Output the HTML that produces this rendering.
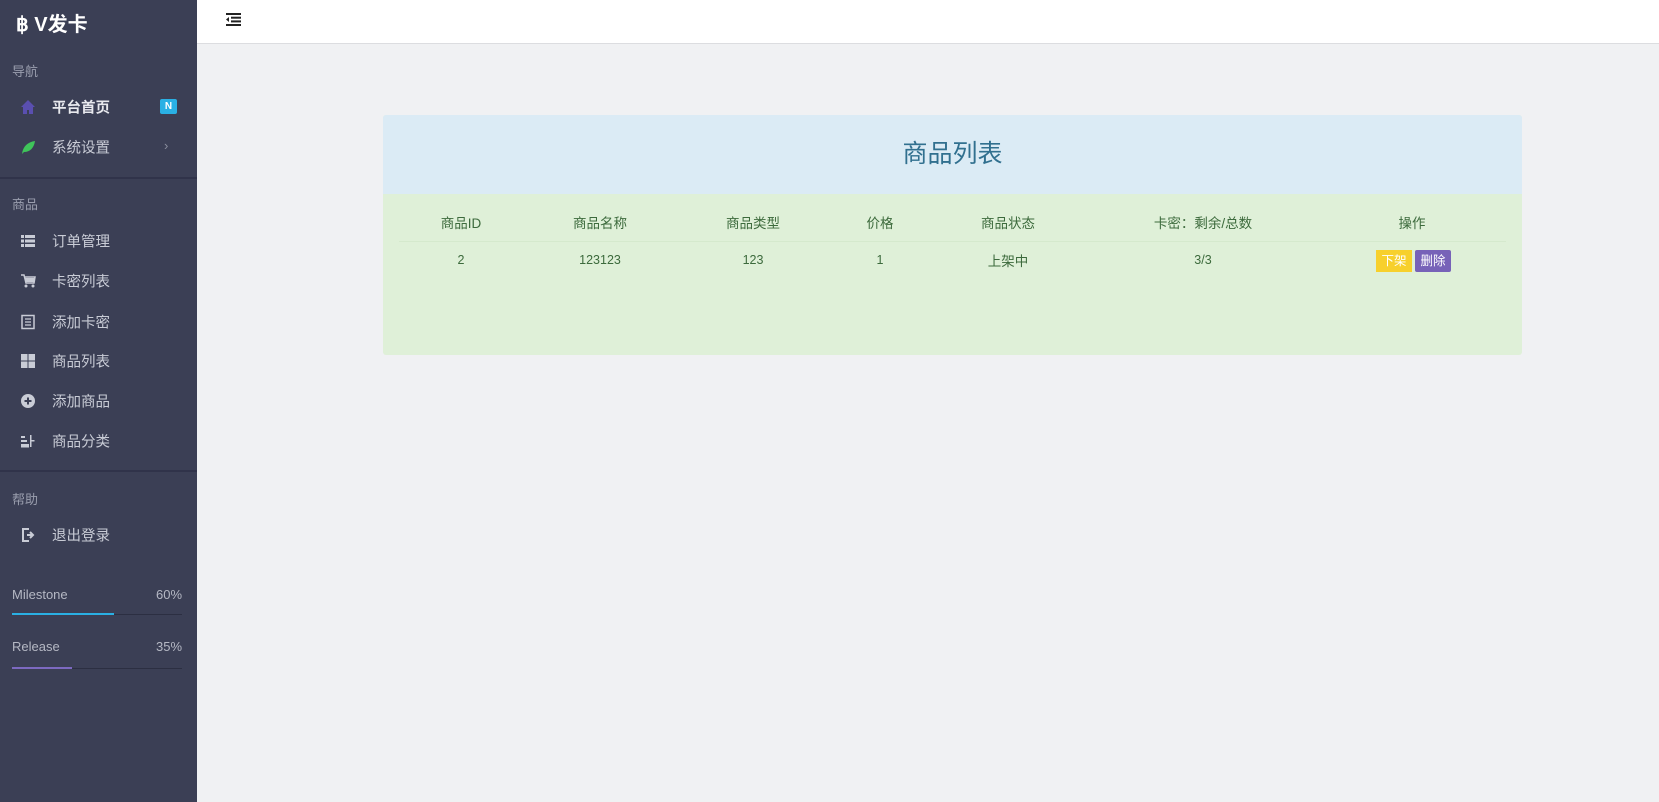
<!DOCTYPE html>
<html><head><meta charset="utf-8"><style>
*{margin:0;padding:0;box-sizing:border-box}
body{width:1659px;height:802px;overflow:hidden;background:#f0f1f3;font-family:"Liberation Sans","Noto Sans CJK SC",sans-serif;position:relative}
.sb{position:absolute;left:0;top:0;width:197px;height:802px;background:#3b3f55;color:#c3c6d1}
.abs{position:absolute}
.lbl{position:absolute;left:12px;font-size:13px;color:#9a9eae}
.it{position:absolute;left:52px;font-size:14.5px;color:#c9ccd6;transform:translateY(-50%)}
.ic{position:absolute;left:20px;width:16px;height:16px;transform:translateY(-50%)}
.hd{position:absolute;left:197px;top:0;right:0;height:44px;background:#fff;border-bottom:1px solid #dcdde0}
.th,.td{position:absolute;transform:translate(-50%,-50%);font-size:13.5px;color:#3c6a3c;white-space:nowrap}
</style></head><body>
<div class="sb">
 <div class="abs" style="left:16px;top:8px;font-size:20px;font-weight:bold;color:#fff">฿ V发卡</div>
 <div class="lbl" style="top:61px">导航</div>
 <svg class="ic" style="top:107px" viewBox="0 0 16 16"><path d="M8 1L1 8h2v7h4v-4h2v4h4V8h2z" fill="#5a4fb0"/></svg>
 <div class="it" style="top:107px;color:#e8e9ee;font-weight:bold">平台首页</div>
 <div class="abs" style="left:160px;top:99px;width:17px;height:15px;background:#2ab0e4;border-radius:2px;color:#fff;font-size:10px;font-weight:bold;text-align:center;line-height:15px">N</div>
 <svg class="ic" style="top:147px" viewBox="0 0 16 16"><path d="M2 15C3 7 8 3 15 2c-1 7-5 11-11 11z" fill="#3fc45a"/></svg>
 <div class="it" style="top:147px">系统设置</div>
 <div class="abs" style="left:164px;top:138px;font-size:13px;color:#8a8e9e">›</div>
 <div class="abs" style="left:0;top:177px;width:197px;height:2px;background:#30334a"></div>
 <div class="lbl" style="top:194px">商品</div>
 <svg class="ic" style="top:241px" viewBox="0 0 16 16" fill="#c9ccd6"><rect x="1" y="2" width="3" height="3"/><rect x="5" y="2" width="10" height="3"/><rect x="1" y="6.5" width="3" height="3"/><rect x="5" y="6.5" width="10" height="3"/><rect x="1" y="11" width="3" height="3"/><rect x="5" y="11" width="10" height="3"/></svg>
 <div class="it" style="top:241px">订单管理</div>
 <svg class="ic" style="top:281px" viewBox="0 0 16 16" fill="#c9ccd6"><path d="M1 2h3l2 8h8l1-6H5" stroke="#c9ccd6" stroke-width="1.5" fill="none"/><rect x="5" y="5" width="9" height="4"/><circle cx="6" cy="13" r="1.5"/><circle cx="13" cy="13" r="1.5"/></svg>
 <div class="it" style="top:281px">卡密列表</div>
 <svg class="ic" style="top:322px" viewBox="0 0 16 16"><rect x="2" y="1.5" width="12" height="13" fill="none" stroke="#c9ccd6" stroke-width="1.5"/><path d="M5 5h6M5 8h6M5 11h6" stroke="#c9ccd6" stroke-width="1.3"/></svg>
 <div class="it" style="top:322px">添加卡密</div>
 <svg class="ic" style="top:361px" viewBox="0 0 16 16" fill="#c9ccd6"><rect x="1" y="1" width="6.5" height="6.5"/><rect x="8.5" y="1" width="6.5" height="6.5"/><rect x="1" y="8.5" width="6.5" height="6.5"/><rect x="8.5" y="8.5" width="6.5" height="6.5"/></svg>
 <div class="it" style="top:361px">商品列表</div>
 <svg class="ic" style="top:401px" viewBox="0 0 16 16"><circle cx="8" cy="8" r="7" fill="#c9ccd6"/><path d="M8 4.5v7M4.5 8h7" stroke="#3b3f55" stroke-width="2"/></svg>
 <div class="it" style="top:401px">添加商品</div>
 <svg class="ic" style="top:441px" viewBox="0 0 16 16" fill="#c9ccd6"><rect x="1" y="3" width="4" height="2"/><rect x="1" y="7" width="6" height="2"/><rect x="1" y="11" width="8" height="2"/><rect x="1" y="13" width="8" height="1.5"/><rect x="10" y="2" width="1.5" height="12"/><rect x="11.5" y="7" width="3" height="1.5"/></svg>
 <div class="it" style="top:441px">商品分类</div>
 <div class="abs" style="left:0;top:470px;width:197px;height:2px;background:#30334a"></div>
 <div class="lbl" style="top:489px">帮助</div>
 <svg class="ic" style="top:535px" viewBox="0 0 16 16"><path d="M9 2H3v12h6" fill="none" stroke="#c9ccd6" stroke-width="2"/><path d="M7 8h6M10 5l3 3-3 3" fill="none" stroke="#c9ccd6" stroke-width="2"/></svg>
 <div class="it" style="top:535px">退出登录</div>
 <div class="abs" style="left:12px;top:587px;font-size:13px;color:#b5b8c4">Milestone</div>
 <div class="abs" style="left:156px;top:587px;font-size:13px;color:#b5b8c4">60%</div>
 <div class="abs" style="left:12px;top:614px;width:170px;height:1px;background:#2c2f42"></div>
 <div class="abs" style="left:12px;top:613px;width:102px;height:2px;background:#2ab0e4"></div>
 <div class="abs" style="left:12px;top:639px;font-size:13px;color:#b5b8c4">Release</div>
 <div class="abs" style="left:156px;top:639px;font-size:13px;color:#b5b8c4">35%</div>
 <div class="abs" style="left:12px;top:668px;width:170px;height:1px;background:#2c2f42"></div>
 <div class="abs" style="left:12px;top:667px;width:60px;height:2px;background:#7c69c0"></div>
</div>
<div class="hd"><svg class="abs" style="left:29px;top:13px" width="15" height="13" viewBox="0 0 15 13" fill="#222"><rect x="0" y="0" width="15" height="2"/><rect x="5" y="3.7" width="10" height="2"/><rect x="5" y="7.4" width="10" height="2"/><rect x="0" y="11" width="15" height="2"/><path d="M0 6.5L3 4v5z"/></svg></div>
<div class="abs" style="left:383px;top:115px;width:1139px;height:240px;background:#dff0d8;border-radius:3px;overflow:hidden">
 <div style="height:79px;background:#dbebf5;color:#31708f;font-size:25px;text-align:center;line-height:78px">商品列表</div>
 <div class="abs" style="left:16px;right:16px;top:126px;height:1px;background:#d5e9cd"></div>
</div>
<div class="th" style="left:461px;top:222px">商品ID</div>
<div class="th" style="left:600px;top:222px">商品名称</div>
<div class="th" style="left:753px;top:222px">商品类型</div>
<div class="th" style="left:880px;top:222px">价格</div>
<div class="th" style="left:1008px;top:222px">商品状态</div>
<div class="th" style="left:1203px;top:222px">卡密：剩余/总数</div>
<div class="th" style="left:1412px;top:222px">操作</div>
<div class="td" style="left:461px;top:260px;font-size:12.5px">2</div>
<div class="td" style="left:600px;top:260px;font-size:12.5px">123123</div>
<div class="td" style="left:753px;top:260px;font-size:12.5px">123</div>
<div class="td" style="left:880px;top:260px;font-size:12.5px">1</div>
<div class="td" style="left:1008px;top:260px">上架中</div>
<div class="td" style="left:1203px;top:260px;font-size:12.5px">3/3</div>
<div class="abs" style="left:1376px;top:250px;width:36px;height:22px;background:#f7d02c;color:#fff;font-size:12.5px;text-align:center;line-height:22px">下架</div>
<div class="abs" style="left:1415px;top:250px;width:36px;height:22px;background:#7762b8;color:#fff;font-size:12.5px;text-align:center;line-height:22px;border-radius:2px">删除</div>
</body></html>
